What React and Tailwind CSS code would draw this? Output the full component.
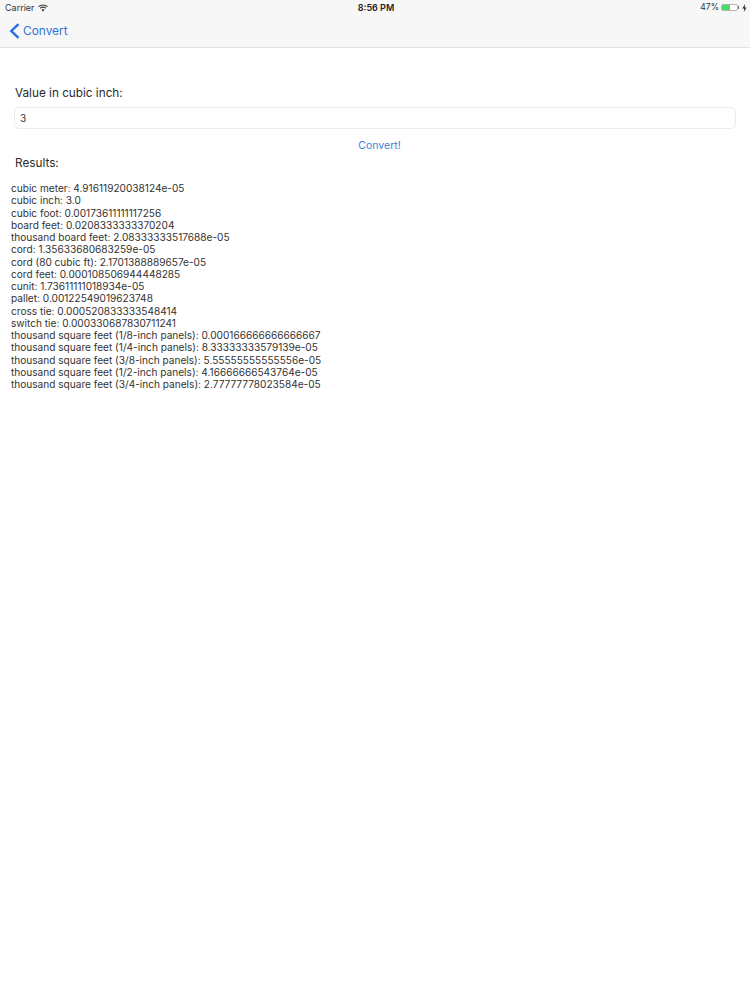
import React from 'react';

const results = [
  'cubic meter: 4.91611920038124e-05',
  'cubic inch: 3.0',
  'cubic foot: 0.00173611111117256',
  'board feet: 0.0208333333370204',
  'thousand board feet: 2.08333333517688e-05',
  'cord: 1.35633680683259e-05',
  'cord (80 cubic ft): 2.1701388889657e-05',
  'cord feet: 0.000108506944448285',
  'cunit: 1.73611111018934e-05',
  'pallet: 0.00122549019623748',
  'cross tie: 0.000520833333548414',
  'switch tie: 0.000330687830711241',
  'thousand square feet (1/8-inch panels): 0.000166666666666667',
  'thousand square feet (1/4-inch panels): 8.33333333579139e-05',
  'thousand square feet (3/8-inch panels): 5.55555555555556e-05',
  'thousand square feet (1/2-inch panels): 4.16666666543764e-05',
  'thousand square feet (3/4-inch panels): 2.77777778023584e-05',
];

function Wifi() {
  return (
    <svg width="10" height="8" viewBox="0 0 10 8" fill="none" className="ml-[3px]">
      <path d="M0.5 2.6 C3 0.4 7 0.4 9.5 2.6" stroke="#3a3a3a" strokeWidth="1.1" />
      <path d="M2.2 4.3 C3.8 3 6.2 3 7.8 4.3" stroke="#3a3a3a" strokeWidth="1.1" />
      <path d="M5 7.8 L3.5 5.8 C4.4 5.2 5.6 5.2 6.5 5.8 Z" fill="#3a3a3a" />
    </svg>
  );
}

function Battery() {
  return (
    <div className="flex items-center ml-[2px]">
      <div className="w-[17px] h-[7px] border border-[#b5b5b5] rounded-[2px] bg-white overflow-hidden">
        <div className="w-[8px] h-full bg-[#4cd964]" />
      </div>
      <div className="w-[1px] h-[3px] bg-[#777]" />
      <svg width="5" height="8" viewBox="0 0 5 8" className="ml-[3px]">
        <path d="M3 0 L0.4 4.5 H2.2 L1.8 8 L4.6 3.4 H2.8 Z" fill="#333" />
      </svg>
    </div>
  );
}

export default function App() {
  return (
    <div className="min-h-[1000px] bg-white text-[#2b2b2b] font-['Inter','Liberation_Sans',sans-serif]">
      <div className="h-[48px] bg-[#f7f7f7] border-b border-[#e3e3e3]">
        <div className="h-[15px] flex items-center justify-between pl-[5px] pr-[3px] text-[9px] text-[#333]">
          <div className="flex items-center w-[120px]">
            Carrier
            <Wifi />
          </div>
          <div className="font-semibold text-[9px] text-[#222]">8:56 PM</div>
          <div className="flex items-center justify-end w-[120px] text-[8.5px]">
            47%
            <Battery />
          </div>
        </div>
        <div className="flex items-center h-[31px] pl-[9px] text-[#2f74d6]">
          <svg width="11" height="16" viewBox="0 0 11 16" fill="none" stroke="#2670dc" strokeWidth="2.4">
            <path d="M9.5 1.2 L2.3 8 L9.5 14.8" />
          </svg>
          <span className="ml-[3px] text-[11.9px] leading-none">Convert</span>
        </div>
      </div>

      <div className="pl-[15px] pt-[37px] text-[11.75px] leading-[17px]">Value in cubic inch:</div>
      <div className="mt-[5px] ml-[14px] mr-[14px] h-[22px] border border-[#ececec] rounded-[5px] flex items-center pl-[5px] text-[10px] leading-none pb-[1px] text-[#333]">
        3
      </div>
      <div className="mt-[10px] flex justify-center pl-[9px] text-[10.5px] leading-[14px] text-[#3b82d8]">Convert!</div>
      <div className="mt-[2px] pl-[15px] text-[11.75px] leading-[17px]">Results:</div>

      <div className="mt-[10px] pl-[11px] text-[10.1px] leading-[12.25px] text-[#333]">
        {results.map((r) => (
          <div key={r}>{r}</div>
        ))}
      </div>
    </div>
  );
}
